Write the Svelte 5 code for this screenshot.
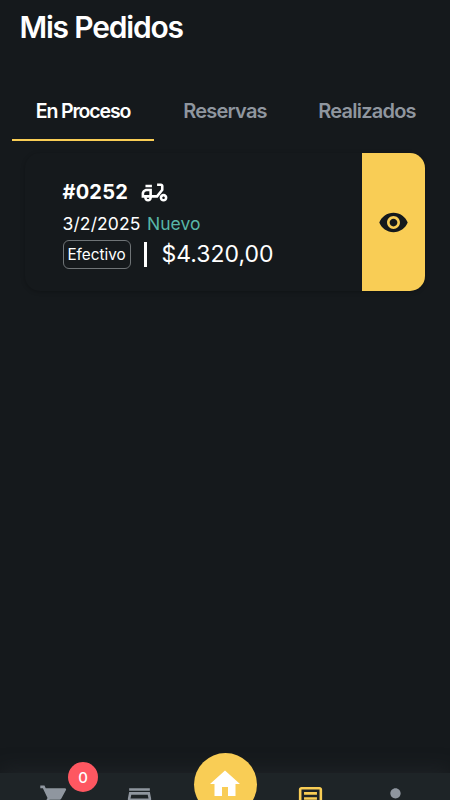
<script>
  const tabs = [
    { label: 'En Proceso', active: true },
    { label: 'Reservas' },
    { label: 'Realizados' }
  ];
  const order = {
    number: '#0252',
    date: '3/2/2025',
    status: 'Nuevo',
    payment: 'Efectivo',
    total: '$4.320,00'
  };
  const cartCount = 0;
</script>

<div class="screen">
  <header><h1>Mis Pedidos</h1></header>

  <nav class="tabs">
    {#each tabs as tab}
      <button class="tab" class:active={tab.active}><span>{tab.label}</span></button>
    {/each}
  </nav>

  <main>
    <article class="card">
      <div class="info">
        <div class="row first">
          <strong>{order.number}</strong>
          <svg class="moped" viewBox="0 0 24 24">
            <path fill-rule="evenodd" d="M19 7c0-1.100-.9-2-2-2h-3v2h3v2.650L13.520 14H10V9H6c-2.210 0-4 1.790-4 4v3h2c0 1.660 1.340 3 3 3s3-1.340 3-3h4.480L19 10.350V7zM4 14v-1c0-1.100.9-2 2-2h2v3H4zm3 3c-.55 0-1-.45-1-1h2c0 .55-.45 1-1 1zM5 6h5v2H5zM19 13c-1.660 0-3 1.340-3 3s1.340 3 3 3 3-1.340 3-3-1.340-3-3-3zm0 4c-.55 0-1-.45-1-1s.45-1 1-1 1 .45 1 1-.45 1-1 1z" />
          </svg>
        </div>
        <div class="row second">
          <span class="date">{order.date}</span>
          <span class="status">{order.status}</span>
        </div>
        <div class="row third">
          <span class="chip">{order.payment}</span>
          <i class="bar"></i>
          <span class="total">{order.total}</span>
        </div>
      </div>
      <button class="view" aria-label="Ver pedido">
        <svg viewBox="0 0 24 24">
          <path d="M12 4.500C7 4.500 2.730 7.610 1 12c1.730 4.390 6 7.500 11 7.500s9.270-3.110 11-7.500c-1.730-4.390-6-7.500-11-7.500zM12 17c-2.760 0-5-2.240-5-5s2.240-5 5-5 5 2.240 5 5-2.240 5-5 5zm0-8c-1.660 0-3 1.340-3 3s1.340 3 3 3 3-1.340 3-3-1.340-3-3-3z" />
        </svg>
      </button>
    </article>
  </main>

  <footer>
    <div class="item">
      <svg viewBox="0 0 24 24">
        <path d="M7 18c-1.100 0-1.990.9-1.990 2S5.900 22 7 22s2-.9 2-2-.9-2-2-2zM1 2v2h2l3.600 7.590-1.350 2.450c-.16.28-.25.61-.25.96 0 1.100.9 2 2 2h12v-2H7.420c-.14 0-.25-.11-.25-.25l.03-.12.900-1.630h7.450c.75 0 1.410-.41 1.750-1.030l3.580-6.490c.08-.14.12-.31.12-.48 0-.55-.45-1-1-1H5.210l-.94-2H1zm16 16c-1.100 0-1.990.9-1.990 2s.89 2 1.990 2 2-.9 2-2-.9-2-2-2z" />
      </svg>
      <span class="badge">{cartCount}</span>
    </div>
    <div class="item">
      <svg viewBox="0 0 24 24">
        <path d="M18.360 9l.6 3H5.040l.6-3h12.720M20 4H4v2h16V4zm0 3H4l-1 5v2h1v6h10v-6h4v6h2v-6h1v-2l-1-5zM6 18v-4h6v4H6z" />
      </svg>
    </div>
    <div class="item">
      <div class="home">
        <svg viewBox="0 0 24 24"><path d="M10 20v-6h4v6h5v-8h3L12 3 2 12h3v8z" /></svg>
      </div>
    </div>
    <div class="item current">
      <svg viewBox="0 0 24 24">
        <path d="M19 5v14H5V5h14m0-2H5c-1.100 0-2 .9-2 2v14c0 1.100.9 2 2 2h14c1.100 0 2-.9 2-2V5c0-1.100-.9-2-2-2zM7 7h10v2H7zM7 11h10v2H7zM7 15h7v2H7z" />
      </svg>
    </div>
    <div class="item">
      <svg viewBox="0 0 24 24">
        <path d="M12 12c2.210 0 4-1.790 4-4s-1.790-4-4-4-4 1.790-4 4 1.790 4 4 4zm0 2c-2.670 0-8 1.340-8 4v2h16v-2c0-2.660-5.330-4-8-4z" />
      </svg>
    </div>
  </footer>
</div>

<style>
  :global(body) {
    background: #15191c;
  }
  .screen {
    width: 450px;
    height: 800px;
    overflow: hidden;
    display: flex;
    flex-direction: column;
    background: #15191c;
    color: #fff;
    font-family: Inter, Roboto, sans-serif;
  }
  svg {
    display: block;
    fill: currentColor;
  }
  button {
    border: 0;
    padding: 0;
    background: none;
    font: inherit;
    color: inherit;
  }
  header {
    height: 82px;
    padding: 7px 19.500px 0;
    box-sizing: border-box;
  }
  h1 {
    margin: 0;
    font-size: 30px;
    line-height: 41px;
    font-weight: 600;
    letter-spacing: -1.2px;
  }
  .tabs {
    display: flex;
    height: 59px;
    padding: 0 12px;
  }
  .tab {
    flex: 1;
    font-size: 20px;
    font-weight: 600;
    letter-spacing: -0.75px;
    color: #8f969f;
    border-bottom: 2px solid transparent;
  }
  .tab.active {
    color: #fff;
    font-size: 19.500px;
    letter-spacing: -1.15px;
    border-color: #f9cd55;
  }
  main {
    flex: 1;
    padding: 12px 25px 0;
  }
  .card {
    display: flex;
    height: 138px;
    border-radius: 15px;
    overflow: hidden;
    box-shadow: 0 1px 4px rgba(0, 0, 0, 0.25);
  }
  .info {
    flex: 1;
    padding: 24px 0 0 37.500px;
  }
  .row {
    display: flex;
    align-items: center;
    white-space: nowrap;
  }
  .first {
    height: 30px;
  }
  .first strong {
    width: 76.500px;
    font-size: 20px;
    font-weight: 700;
    letter-spacing: 0.2px;
  }
  .moped {
    width: 31px;
    height: 31px;
  }
  .second {
    height: 33px;
    gap: 6.500px;
    font-size: 17.500px;
  }
  .date {
    letter-spacing: 0.12px;
  }
  .status {
    color: #58b5a7;
  }
  .third {
    height: 28px;
  }
  .chip {
    box-sizing: border-box;
    width: 68px;
    height: 29px;
    line-height: 27px;
    border: 1px solid #6f7477;
    border-radius: 6px;
    text-align: center;
    font-size: 15.300px;
  }
  .bar {
    width: 3px;
    height: 25px;
    margin: 0 14.500px 0 13.500px;
    background: #fff;
  }
  .total {
    font-size: 23px;
  }
  .view {
    width: 63px;
    display: flex;
    align-items: center;
    justify-content: center;
    background: #f9cd55;
    color: #15191c;
  }
  .view svg {
    width: 31px;
    height: 31px;
  }
  footer {
    display: flex;
    height: 27px;
    padding: 0 11.500px;
    background: #1e2427;
    color: #8f969f;
    box-shadow: 0 -4px 20px rgba(42, 46, 52, 0.45);
  }
  .item {
    position: relative;
    flex: 1;
    height: 44px;
    display: flex;
    justify-content: center;
    padding-top: 9.500px;
    box-sizing: border-box;
  }
  .item > svg {
    flex: none;
    width: 31px;
    height: 31px;
  }
  .current {
    color: #f9cd55;
  }
  .badge {
    position: absolute;
    left: 56.500px;
    top: -11px;
    width: 30px;
    height: 30px;
    line-height: 32px;
    border-radius: 50%;
    background: #fe5761;
    color: #fff;
    text-align: center;
    font-size: 15px;
    font-weight: 500;
  }
  .home {
    position: absolute;
    left: calc(50% - 31.500px);
    top: -20px;
    width: 63px;
    height: 63px;
    display: flex;
    justify-content: center;
    padding-top: 13px;
    box-sizing: border-box;
    border-radius: 50%;
    background: #f9cd55;
    color: #fff;
  }
  .home svg {
    width: 36px;
    height: 36px;
  }
</style>
